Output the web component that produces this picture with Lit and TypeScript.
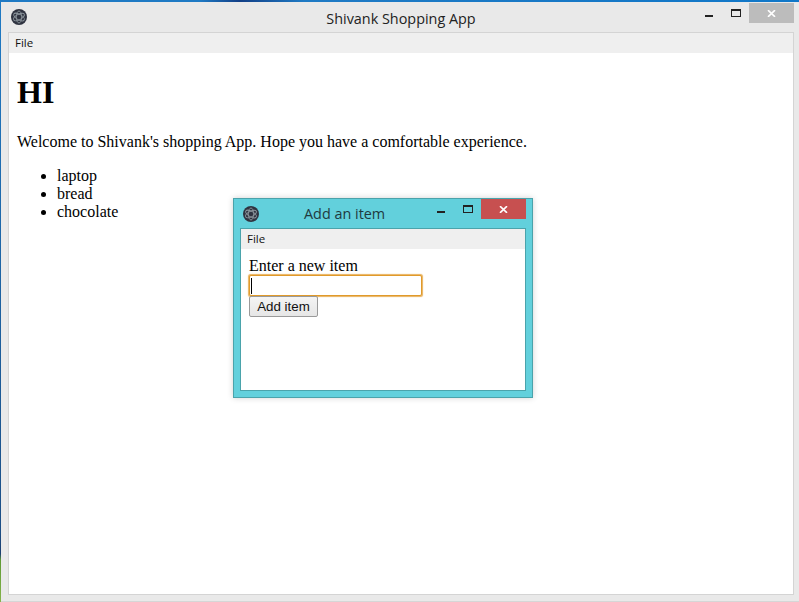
import { LitElement, html, css, svg } from "lit";
import { customElement } from "lit/decorators.js";

const atom = svg`<svg class="logo" viewBox="0 0 16 16" width="16" height="16">
  <circle cx="8" cy="8" r="8" fill="#2f3340"/>
  <g fill="none" stroke="#bcc8cc" stroke-width="0.9" opacity="0.65">
    <ellipse cx="8" cy="8" rx="6" ry="2.7" transform="rotate(30 8 8)"/>
    <ellipse cx="8" cy="8" rx="6" ry="2.7" transform="rotate(90 8 8)"/>
    <ellipse cx="8" cy="8" rx="6" ry="2.7" transform="rotate(150 8 8)"/>
  </g>
</svg>`;

const closeX = svg`<svg viewBox="0 0 9 7" width="9" height="7"><path d="M1 .2 L8 6.8 M8 .2 L1 6.8" stroke="#fff" stroke-width="1.7" fill="none"/></svg>`;

@customElement("app-root")
export class AppRoot extends LitElement {
  static styles = css`
    :host { display: block; width: 799px; height: 602px; position: relative; overflow: hidden; background: #e9e9e9; font-family: "Liberation Serif", serif; font-size: 16px; color: #000; }
    .desk { height: 2px; background: linear-gradient(90deg, #1f7ac4 0%, #1f7ac4 25%, #123f86 30%, #1f7ac4 38%, #1077c8 100%); }
    .edge { position: absolute; left: 0; top: 0; bottom: 0; width: 1px; background: linear-gradient(180deg, #1f7ac4 0%, #1c4f86 88%, #1c3f70 92%, #5f9a35 93%, #86b44c 100%); }
    .main { display: flex; flex-direction: column; height: 599px; padding-left: 8px; padding-right: 5px; padding-bottom: 6px; box-sizing: border-box; }
    .foot { height: 1px; background: #d6d6d6; }
    .titlebar { height: 30px; flex: none; display: flex; align-items: center; justify-content: center; padding-top: 2px; box-sizing: border-box; }
    .title { font-family: "Open Sans", sans-serif; font-size: 14.4px; color: #222; }
    .client { flex: 1; border: 1px solid #d4d4d4; background: #fff; display: flex; flex-direction: column; min-height: 0; }
    .menu { flex: none; height: 20px; background: #efefef; font-family: "Open Sans", sans-serif; font-size: 11.5px; line-height: 20px; padding-left: 6px; color: #111; }
    .page { padding: 0 8px; flex: 1; }
    h1 { font-size: 32px; line-height: 37px; margin: 21.44px 0; font-weight: bold; }
    p { margin: 16px 0; line-height: 18px; }
    ul { margin: 16px 0; padding-left: 40px; }
    li { line-height: 18px; }

    .logo { display: block; }
    .main-logo { position: absolute; left: 11px; top: 9px; width: 16px; height: 16px; }
    .ctl { position: absolute; }
    .min { height: 2px; background: #222; }
    .max { box-sizing: border-box; border: 1px solid #222; border-top-width: 2px; }
    .close { display: flex; align-items: center; justify-content: center; }

    .m-min { left: 705px; top: 15px; width: 8px; }
    .m-max { left: 731px; top: 9px; width: 10px; height: 8px; }
    .m-close { left: 749px; top: 3px; width: 45px; height: 20px; background: #bcbcbc; }

    .dialog { position: absolute; left: 233px; top: 198px; width: 300px; height: 200px; box-sizing: border-box; background: #62d0dc; border: 1px solid #4aa3ab; box-shadow: 0 0 6px rgba(0,0,0,.18); display: flex; flex-direction: column; padding: 0 6px 6px; }
    .d-bar { flex: none; height: 29px; position: relative; }
    .d-logo { position: absolute; left: 3px; top: 7px; width: 16px; height: 16px; }
    .d-title { position: absolute; left: 64px; top: 6px; font-family: "Open Sans", sans-serif; font-size: 14.4px; line-height: 18px; color: #1f3a40; }
    .d-min { left: 197px; top: 12px; width: 8px; }
    .d-max { left: 223px; top: 6px; width: 10px; height: 8px; }
    .d-close { left: 241px; top: 0; width: 45px; height: 20px; background: #c75050; }
    .d-client { flex: 1; background: #fff; border: 1px solid #4aa3ab; display: flex; flex-direction: column; min-height: 0; }
    .form { padding: 8px 8px; display: flex; flex-direction: column; align-items: flex-start; }
    label { line-height: 18px; }
    .input { box-sizing: border-box; width: 173px; height: 21px; border: 1px solid #e09a2b; border-radius: 2px; box-shadow: 0 0 1px 0.5px #e9b25e; display: flex; align-items: center; padding-left: 1px; background: #fff; }
    .caret { width: 1px; height: 16px; background: #000; }
    button { box-sizing: border-box; width: 69px; height: 21px; margin: 0; padding: 0; background: linear-gradient(#f4f4f4, #e6e6e6); border: 1px solid #9a9a9a; border-radius: 2px; font-family: "Liberation Sans", sans-serif; font-size: 13.33px; color: #111; }
  `;

  render() {
    return html`
      <div class="desk"></div>
      <div class="edge"></div>
      <div class="main">
        <div class="titlebar">
          <span class="title">Shivank Shopping App</span>
        </div>
        <div class="client">
          <div class="menu">File</div>
          <div class="page">
            <h1>HI</h1>
            <p>Welcome to Shivank's shopping App. Hope you have a comfortable experience.</p>
            <ul>
              <li>laptop</li>
              <li>bread</li>
              <li>chocolate</li>
            </ul>
          </div>
        </div>
      </div>
      <div class="foot"></div>
      <div class="main-logo">${atom}</div>
      <div class="ctl min m-min"></div>
      <div class="ctl max m-max"></div>
      <div class="ctl close m-close">${closeX}</div>

      <div class="dialog">
        <div class="d-bar">
          <div class="d-logo">${atom}</div>
          <span class="d-title">Add an item</span>
          <div class="ctl min d-min"></div>
          <div class="ctl max d-max"></div>
          <div class="ctl close d-close">${closeX}</div>
        </div>
        <div class="d-client">
          <div class="menu">File</div>
          <div class="form">
            <label>Enter a new item</label>
            <div class="input"><div class="caret"></div></div>
            <button>Add item</button>
          </div>
        </div>
      </div>
    `;
  }
}
